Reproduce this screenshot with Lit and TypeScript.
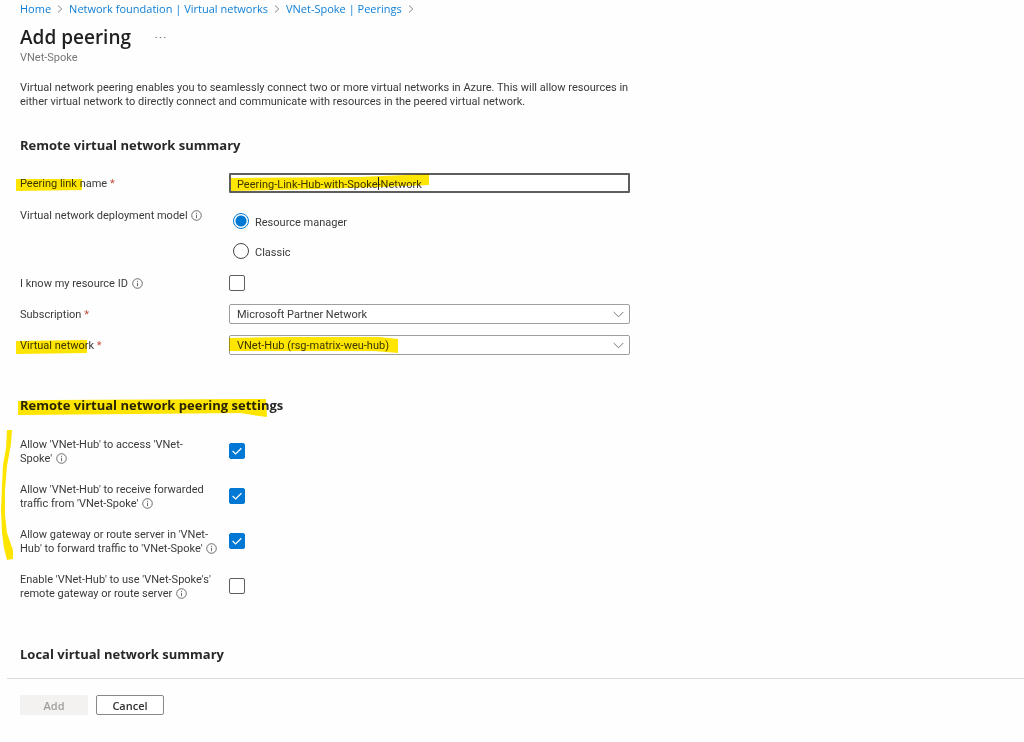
import { LitElement, html, css, svg, nothing } from "lit";
import { customElement, property } from "lit/decorators.js";

const chevronRight = html`<svg class="sep" width="6" height="8" viewBox="0 0 6 8" aria-hidden="true">
  <path d="M1 .5 4.8 4 1 7.5" fill="none" stroke="#8a8886" stroke-width="1" />
</svg>`;

const infoIcon = html`<svg class="info" width="11" height="11" viewBox="0 0 11 11" aria-hidden="true">
  <circle cx="5.5" cy="5.5" r="4.8" fill="none" stroke="#605e5c" stroke-width="0.9" />
  <path d="M5.5 4.8V8.2M5.5 2.8V3.9" stroke="#605e5c" stroke-width="0.9" />
</svg>`;

const withInfo = (text: string) => html`${text}&nbsp;${infoIcon}`;

/* A felt-pen stroke laid over the form; blended so the text stays readable. */
const marker = (name: string, w: number, h: number, d: string) =>
  html`<svg class="marker ${name}" width=${w} height=${h} viewBox="0 0 ${w} ${h}" aria-hidden="true">
    ${svg`<path d=${d} fill="#ffe600" />`}
  </svg>`;

interface PeeringOption {
  id: string;
  text: string;
  checked: boolean;
}

/* A newline in the text is a wanted line break in the label. */
const remoteOptions: PeeringOption[] = [
  { id: "access", text: "Allow 'VNet-Hub' to access 'VNet-\nSpoke'", checked: true },
  { id: "forwarded", text: "Allow 'VNet-Hub' to receive forwarded traffic from 'VNet-Spoke'", checked: true },
  { id: "gateway", text: "Allow gateway or route server in 'VNet-Hub' to forward traffic to 'VNet-Spoke'", checked: true },
  { id: "remote", text: "Enable 'VNet-Hub' to use 'VNet-Spoke's' remote gateway or route server", checked: false },
];

@customElement("check-box")
class CheckBox extends LitElement {
  @property({ type: Boolean }) checked = false;
  @property() label = "";

  static styles = css`
    :host {
      display: grid;
      width: 16px;
      height: 16px;
    }
    .box,
    .tick {
      grid-area: 1 / 1;
    }
    .box {
      appearance: none;
      box-sizing: border-box;
      width: 16px;
      height: 16px;
      margin: 0;
      border: 1px solid #605e5c;
      border-radius: 2px;
      background: #fff;
    }
    .box:checked {
      background: #0078d4;
      border-color: #0078d4;
    }
    .tick {
      pointer-events: none;
    }
  `;

  render() {
    return html`<input class="box" type="checkbox" aria-label=${this.label} .checked=${this.checked}
        @change=${(e: Event) => (this.checked = (e.target as HTMLInputElement).checked)} />
      ${this.checked
        ? html`<svg class="tick" width="16" height="16" viewBox="0 0 16 16" aria-hidden="true">
            <path d="M3.6 8 6.6 10.9 12.4 5.2" fill="none" stroke="#fff" stroke-width="1.2" />
          </svg>`
        : nothing}`;
  }
}

@customElement("app-root")
class AppRoot extends LitElement {
  static styles = css`
    :host {
      display: block;
      min-height: 100vh;
      background: #fefefe;
      color: #3b3a39;
      font: 11px/14px Roboto, "Open Sans", sans-serif;
    }
    .content {
      padding: 0 20px;
    }
    .breadcrumb {
      display: flex;
      align-items: center;
      padding-top: 1px;
      font-family: "Open Sans", sans-serif;
      line-height: 16px;
    }
    .breadcrumb a {
      color: #0f7fd6;
      text-decoration: none;
    }
    .sep {
      margin: 0 6px;
    }
    .title-row {
      display: flex;
      align-items: center;
      gap: 24px;
      margin-top: 6px;
    }
    h1 {
      margin: 0;
      color: #201f1e;
      font: 600 19px/28px "Open Sans", sans-serif;
    }
    .more {
      display: flex;
      padding: 0;
      border: 0;
      background: none;
    }
    .subtitle {
      color: #797775;
    }
    .intro {
      max-width: 610px;
      margin: 16px 0 0;
    }
    h2 {
      position: relative;
      margin: 26px 0 18px;
      color: #292827;
      font: 700 13px/20px "Open Sans", sans-serif;
    }
    .settings {
      margin: 40px 0 21px;
    }
    .local {
      margin: 43px 0 14px;
    }
    .form,
    .options {
      position: relative;
      display: grid;
      gap: 11px;
      max-width: 610px;
    }
    .options {
      gap: 15px;
    }
    .row {
      position: relative;
      display: grid;
      grid-template-columns: 201px minmax(0, 1fr);
      column-gap: 8px;
      align-items: center;
      min-height: 20px;
    }
    .row.top {
      align-items: start;
    }
    .name {
      position: relative;
      padding-top: 2px;
      white-space: pre-line;
    }
    .row.top .name {
      padding-top: 5px;
    }
    .req {
      color: #c4513a;
    }
    .info {
      margin-left: 1px;
      vertical-align: -2px;
    }
    .field {
      position: relative;
      display: grid;
      align-items: center;
    }
    .text,
    .select {
      appearance: none;
      grid-area: 1 / 1;
      box-sizing: border-box;
      width: 100%;
      height: 20px;
      margin: 0;
      padding: 2px 7px 0;
      border: 1px solid #a19f9d;
      border-radius: 2px;
      outline: none;
      background: #fff;
      color: #3b3a39;
      font: inherit;
    }
    .text {
      padding: 2px 6px 0;
      border: 2px solid #605e5c;
      border-radius: 1px;
    }
    .arrow {
      grid-area: 1 / 1;
      justify-self: end;
      margin-right: 6px;
      pointer-events: none;
    }
    .radios {
      display: grid;
      gap: 10px;
      padding: 7px 0 1px 4px;
    }
    .radio {
      display: flex;
      align-items: center;
      gap: 6px;
      height: 20px;
    }
    .radio input {
      appearance: none;
      box-sizing: border-box;
      width: 16px;
      height: 16px;
      margin: 0;
      border: 1px solid #484644;
      border-radius: 50%;
      background: #fff;
    }
    .radio input:checked {
      border-color: #0078d4;
      background: radial-gradient(circle, #0078d4 5px, #fff 6px);
    }
    .radio span {
      padding-top: 4px;
    }
    .marker {
      position: absolute;
      mix-blend-mode: multiply;
      pointer-events: none;
    }
    .m-name {
      left: -4px;
      top: 1px;
    }
    .m-value,
    .m-vnet {
      left: 0;
      top: 1px;
    }
    .m-heading {
      left: -2px;
      top: 3px;
    }
    .m-bracket {
      left: -19px;
      top: -6px;
    }
    .caret {
      position: absolute;
      left: 149px;
      top: 4px;
      width: 1px;
      height: 13px;
      background: #201f1e;
    }
    .footer {
      display: flex;
      gap: 8px;
      margin-left: 7px;
      padding: 16px 13px;
      border-top: 1px solid #dcdbda;
    }
    .btn {
      box-sizing: border-box;
      width: 68px;
      height: 20px;
      padding: 2px 0 0;
      border: 1px solid #8a8886;
      border-radius: 2px;
      background: #fff;
      color: #323130;
      font: 600 11px/16px "Open Sans", sans-serif;
    }
    .btn:disabled {
      border-color: #f3f2f1;
      background: #f3f2f1;
      color: #a19f9d;
    }
  `;

  private select(id: string, value: string) {
    return html`<select class="select" id=${id}><option>${value}</option></select>
      <svg class="arrow" width="11" height="7" viewBox="0 0 11 7" aria-hidden="true">
        <path d="M.7 1 5.5 5.8 10.3 1" fill="none" stroke="#797775" stroke-width="1" />
      </svg>`;
  }

  render() {
    return html`
      <main class="content">
        <nav class="breadcrumb" aria-label="Breadcrumb">
          <a href="#">Home</a>${chevronRight}
          <a href="#">Network foundation | Virtual networks</a>${chevronRight}
          <a href="#">VNet-Spoke | Peerings</a>${chevronRight}
        </nav>
        <div class="title-row">
          <h1>Add peering</h1>
          <button class="more" aria-label="More">
            <svg width="11" height="3" viewBox="0 0 11 3">
              <path d="M.5 1.5h1.4M4.8 1.5h1.4M9.1 1.5h1.4" stroke="#797775" stroke-width="1.2" />
            </svg>
          </button>
        </div>
        <div class="subtitle">VNet-Spoke</div>
        <p class="intro">
          Virtual network peering enables you to seamlessly connect two or more virtual networks in Azure. This will
          allow resources in either virtual network to directly connect and communicate with resources in the peered
          virtual network.
        </p>

        <h2>Remote virtual network summary</h2>
        <div class="form">
          <div class="row">
            <label class="name" for="link">Peering link name <span class="req">*</span></label>
            ${marker("m-name", 66, 17, "M0 5H66V16L0 17Z")}
            <div class="field">
              <input class="text" id="link" value="Peering-Link-Hub-with-Spoke-Network" />
              ${marker("m-value", 201, 17, "M2 4 130 3 200 0 200 11 150 13 90 15 2 17Z")}
              <span class="caret"></span>
            </div>
          </div>
          <div class="row top">
            <span class="name" id="model">${withInfo("Virtual network deployment model")}</span>
            <div class="radios" role="radiogroup" aria-labelledby="model">
              <label class="radio"><input type="radio" name="model" checked /><span>Resource manager</span></label>
              <label class="radio"><input type="radio" name="model" /><span>Classic</span></label>
            </div>
          </div>
          <div class="row">
            <span class="name">${withInfo("I know my resource ID")}</span>
            <check-box label="I know my resource ID"></check-box>
          </div>
          <div class="row">
            <label class="name" for="sub">Subscription <span class="req">*</span></label>
            <div class="field">${this.select("sub", "Microsoft Partner Network")}</div>
          </div>
          <div class="row">
            <label class="name" for="vnet">Virtual network <span class="req">*</span></label>
            ${marker("m-name", 71, 18, "M0 5 71 4V17L0 18Z")}
            <div class="field">
              ${this.select("vnet", "VNet-Hub (rsg-matrix-weu-hub)")}
              ${marker("m-vnet", 170, 17, "M0 2 60 1 150 1 169 3V17L145 15 0 15Z")}
            </div>
          </div>
        </div>

        <h2 class="settings">
          Remote virtual network peering settings
          ${marker("m-heading", 250, 19, "M0 3 30 2 248 1 249 19 241 18 222 15 120 16 0 17Z")}
        </h2>
        <div class="options">
          ${remoteOptions.map(
            (o) => html`<div class="row">
              <span class="name">${withInfo(o.text)}</span>
              <check-box label=${o.text.replace("\n", "")} ?checked=${o.checked}></check-box>
            </div>`,
          )}
          ${marker(
            "m-bracket",
            13,
            130,
            "M6 0H11L10 14 6 36 4 60 4 85 6 103 12 120 12 129 6 130 3 118 1 103 0 80 1 55 2 35 5 18Z",
          )}
        </div>
        <h2 class="local">Local virtual network summary</h2>
      </main>
      <footer class="footer">
        <button class="btn" disabled>Add</button>
        <button class="btn">Cancel</button>
      </footer>
    `;
  }
}
